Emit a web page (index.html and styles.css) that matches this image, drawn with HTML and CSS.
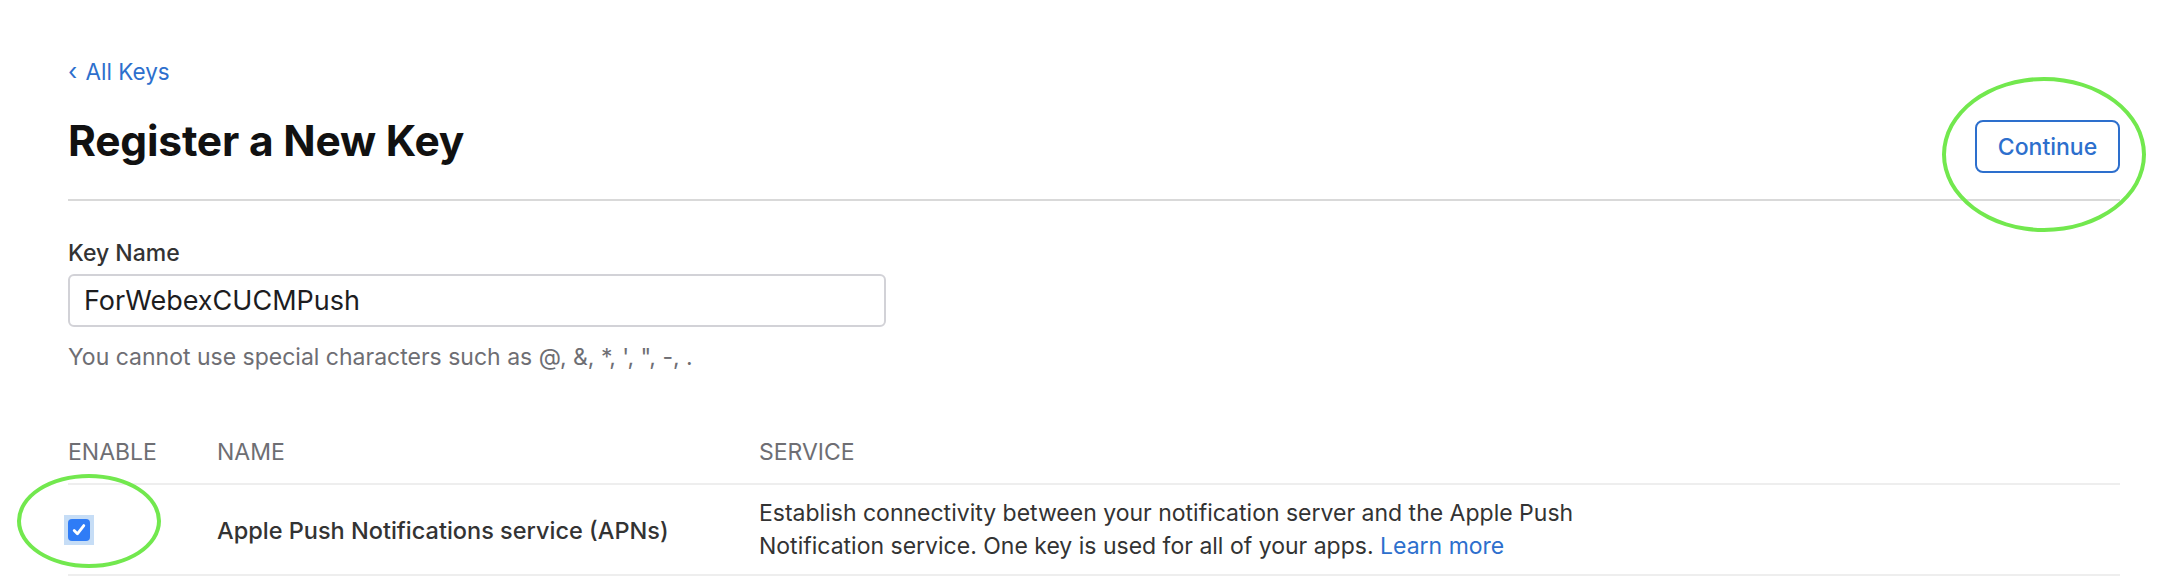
FILE: index.html
```html
<!DOCTYPE html>
<html lang="en">
<head>
<meta charset="utf-8">
<title>Register a New Key</title>
<link rel="stylesheet" href="styles.css">
</head>
<body>
<div class="page">
  <a class="back" href="#"><span class="chev">‹</span> All Keys</a>
  <div class="header">
    <h1 class="title">Register a New Key</h1>
    <button class="btn-continue" type="button">Continue</button>
  </div>

  <section class="field">
    <label class="field-label" for="keyname">Key Name</label>
    <div class="input" id="keyname">ForWebexCUCMPush</div>
    <p class="hint">You cannot use special characters such as @, &amp;, *, ', ", -, .</p>
  </section>

  <div class="table">
    <div class="thead">
      <div class="c-enable">ENABLE</div>
      <div class="c-name">NAME</div>
      <div class="c-service">SERVICE</div>
    </div>
    <div class="trow">
      <div class="c-enable">
        <span class="check-wrap"><span class="check">
          <svg width="16" height="16" viewBox="0 0 16 16"><path d="M3.2 8.6 L6.4 11.8 L12.8 3.6" fill="none" stroke="#fff" stroke-width="2.8" stroke-linecap="round" stroke-linejoin="round"/></svg>
        </span></span>
      </div>
      <div class="c-name name-text">Apple Push Notifications service (APNs)</div>
      <div class="c-service service-text">Establish connectivity between your notification server and the Apple Push Notification service. One key is used for all of your apps. <a href="#" class="link">Learn more</a></div>
    </div>
  </div>

  <div class="ring ring-continue"></div>
  <div class="ring ring-check"></div>
</div>
</body>
</html>
```

FILE: styles.css
```css
* { box-sizing: border-box; }
html, body { margin: 0; padding: 0; background: #fff; }
body {
  font-family: Inter, "Noto Sans", "Liberation Sans", sans-serif;
  color: #1d1d1f;
}
.page {
  position: relative;
  padding: 57px 48px 0 68px;
  height: 588px;
}
.back {
  display: inline-block;
  color: #2d6fcd;
  text-decoration: none;
  font-size: 22.5px;
  line-height: 30px;
}
.chev { font-size: 24px; margin-right: 2px; }
.header {
  display: flex;
  justify-content: space-between;
  align-items: center;
  margin-top: 21px;
  padding-bottom: 26px;
  border-bottom: 2px solid #d9d9d9;
}
.title {
  margin: 0;
  font-size: 42.5px;
  font-weight: 700;
  line-height: 52px;
  letter-spacing: -0.2px;
  color: #111;
}
.btn-continue {
  font-family: inherit;
  width: 145px;
  height: 53px;
  margin-top: 12px;
  border: 2px solid #2d6fcd;
  border-radius: 8px;
  background: #fff;
  color: #2d6fcd;
  font-size: 23px;
  font-weight: 500;
}
.field { padding-top: 37px; }
.field-label {
  display: block;
  font-size: 23px;
  font-weight: 500;
  line-height: 30px;
  color: #333;
}
.input {
  margin-top: 6px;
  width: 818px;
  height: 53px;
  border: 2px solid #d2d2d7;
  border-radius: 6px;
  padding: 0 14px;
  display: flex;
  align-items: center;
  font-size: 27px;
  color: #1d1d1f;
}
.hint {
  margin: 15px 0 0;
  font-size: 23px;
  line-height: 30px;
  color: #6e6e73;
}
.table { margin-top: 65px; }
.thead, .trow {
  display: grid;
  grid-template-columns: 149px 542px 850px;
  border-bottom: 2px solid #eeeeee;
}
.thead {
  font-size: 23px;
  line-height: 30px;
  color: #6e6e73;
  padding-bottom: 16px;
}
.trow {
  align-items: center;
  padding: 12px 0 11px;
}
.check-wrap {
  display: inline-flex;
  align-items: center;
  justify-content: center;
  width: 30px;
  height: 30px;
  margin-left: -4px;
  background: #c6ddf6;
}
.check {
  width: 22px;
  height: 22px;
  border-radius: 4px;
  background: #2f7cf6;
  display: flex;
  align-items: center;
  justify-content: center;
}
.name-text {
  font-size: 23.5px;
  font-weight: 500;
  color: #333;
}
.service-text {
  font-size: 23px;
  line-height: 33px;
  color: #333;
}
.link { color: #2d6fcd; text-decoration: none; }
.ring {
  position: absolute;
  border: 4px solid #72e84e;
  border-radius: 50%;
}
.ring-continue {
  left: 1942px;
  top: 77px;
  width: 204px;
  height: 155px;
}
.ring-check {
  left: 17px;
  top: 474px;
  width: 144px;
  height: 94px;
}
```
